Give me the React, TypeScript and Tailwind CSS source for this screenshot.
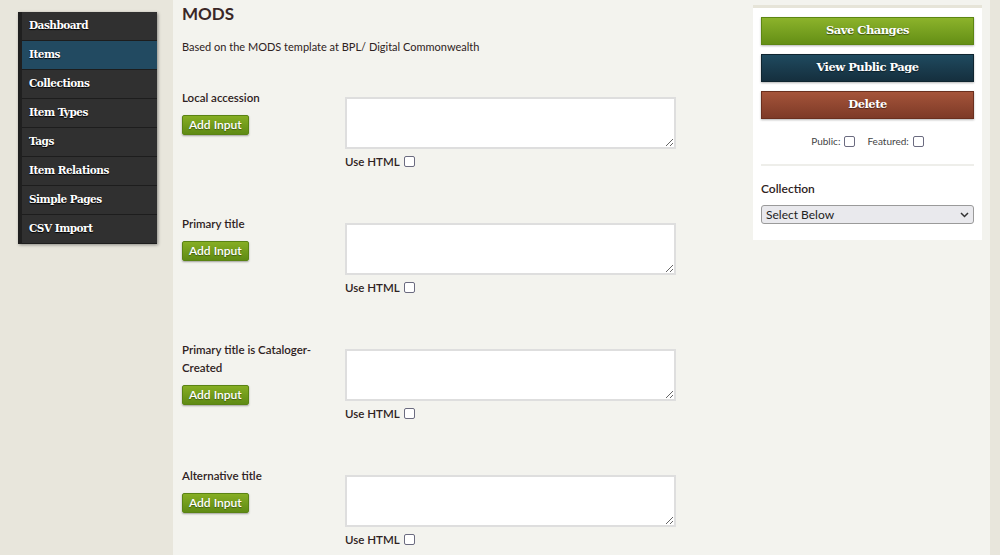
import React from "react";

const navItems = [
  "Dashboard",
  "Items",
  "Collections",
  "Item Types",
  "Tags",
  "Item Relations",
  "Simple Pages",
  "CSV Import",
];

const fields = [
  "Local accession",
  "Primary title",
  "Primary title is Cataloger-Created",
  "Alternative title",
];

const slab = '"DejaVu Serif", "Liberation Serif", serif';

const Sidebar = () => {
  return (
    <nav className="mt-[12px] ml-[18px] w-[139px] shrink-0 self-start bg-[#303030] border-l-4 border-[#1f1f1f] shadow-[1px_1px_3px_rgba(0,0,0,0.4)]">
      {navItems.map((item) => (
        <div
          key={item}
          className={
            item === "Items"
              ? "h-[29px] pl-[7px] flex items-center border-b border-[#1d1d1d] bg-[#224a61] text-white text-[10.5px] font-bold tracking-[-0.5px] [text-shadow:0_1px_1px_#000]"
              : "h-[29px] pl-[7px] flex items-center border-b border-[#1d1d1d] text-white text-[10.5px] font-bold tracking-[-0.5px] [text-shadow:0_1px_1px_#000]"
          }
          style={{ fontFamily: slab }}
        >
          {item}
        </div>
      ))}
    </nav>
  );
};

const FieldRow = ({ label }: { label: string }) => {
  return (
    <div className="flex h-[126px]">
      <div className="w-[163px] shrink-0">
        <div className="w-[150px] text-[11.5px] font-semibold leading-[18px] text-[#2e2222]">
          {label}
        </div>
        <button className="mt-[8px] h-[20px] px-[6px] rounded-[2px] bg-gradient-to-b from-[#86ae23] to-[#5f8b14] border border-[#5a8313] text-white text-[12px] font-semibold shadow-[0_1px_2px_rgba(0,0,0,0.35)] [text-shadow:0_1px_1px_rgba(0,0,0,0.4)]">
          Add Input
        </button>
      </div>
      <div className="w-[331px] pt-[8px]">
        <textarea className="block w-[331px] h-[52px] bg-white border-2 border-[#dedede] resize-y" />
        <label className="mt-[4px] flex items-center gap-[4px] text-[11.5px] font-semibold text-[#2e2222]">
          Use HTML
          <span className="inline-block w-[11px] h-[11px] border border-[#6b6b80] rounded-[2px] bg-white" />
        </label>
      </div>
    </div>
  );
};

const SidePanel = () => {
  const btn =
    "h-[28px] w-full flex items-center justify-center text-white text-[11.5px] font-bold tracking-[-0.5px] border shadow-[0_1px_2px_rgba(0,0,0,0.3)] [text-shadow:0_1px_1px_rgba(0,0,0,0.5)]";
  return (
    <aside className="mt-[5px] w-[229px] shrink-0 self-start bg-white border-t-[3px] border-[#e6e4d8] px-[8px] pt-[9px] pb-[16px]">
      <div className="flex flex-col gap-[9px]" style={{ fontFamily: slab }}>
        <div className={btn + " bg-gradient-to-b from-[#8cb32b] to-[#648f15] border-[#5c8612]"}>Save Changes</div>
        <div className={btn + " bg-gradient-to-b from-[#1f4a5f] to-[#152f3e] border-[#0f2530]"}>View Public Page</div>
        <div className={btn + " bg-gradient-to-b from-[#a5543a] to-[#7d3a27] border-[#6a2f1e]"}>Delete</div>
      </div>
      <div className="mt-[15px] flex justify-center items-center gap-[4px] text-[10px] text-[#444]">
        <span>Public:</span>
        <span className="inline-block w-[11px] h-[11px] border border-[#6b6b80] rounded-[2px] mr-[8px]" />
        <span>Featured:</span>
        <span className="inline-block w-[11px] h-[11px] border border-[#6b6b80] rounded-[2px]" />
      </div>
      <div className="mt-[15px] border-t-2 border-[#eeeeea]" />
      <div className="mt-[14px] text-[12px] font-semibold text-[#2e2222]">Collection</div>
      <div className="mt-[7px] h-[19px] px-[4px] flex items-center justify-between rounded-[3px] border border-[#9a9a9a] bg-[#e9e9ed] text-[12px] text-[#222]">
        <span>Select Below</span>
        <svg width="9" height="6" viewBox="0 0 9 6" fill="none">
          <path d="M1 1l3.5 3.5L8 1" stroke="#333" strokeWidth="1.5" />
        </svg>
      </div>
    </aside>
  );
};

export default function App() {
  return (
    <div
      className="flex w-[1000px] h-[555px] overflow-hidden bg-[#e8e6dc]"
      style={{ fontFamily: 'Lato, "Open Sans", sans-serif' }}
    >
      <Sidebar />
      <main className="ml-[16px] w-[817px] h-full bg-[#f3f3ee] flex">
        <div className="pl-[9px] w-[580px] shrink-0">
          <h1 className="mt-[1px] text-[17px] font-bold text-[#3a2727]">MODS</h1>
          <p className="mt-[12px] text-[11px] text-[#2e2222]">
            Based on the MODS template at BPL/ Digital Commonwealth
          </p>
          <div className="mt-[34px]">
            {fields.map((f) => (
              <FieldRow key={f} label={f} />
            ))}
          </div>
        </div>
        <SidePanel />
      </main>
    </div>
  );
}
